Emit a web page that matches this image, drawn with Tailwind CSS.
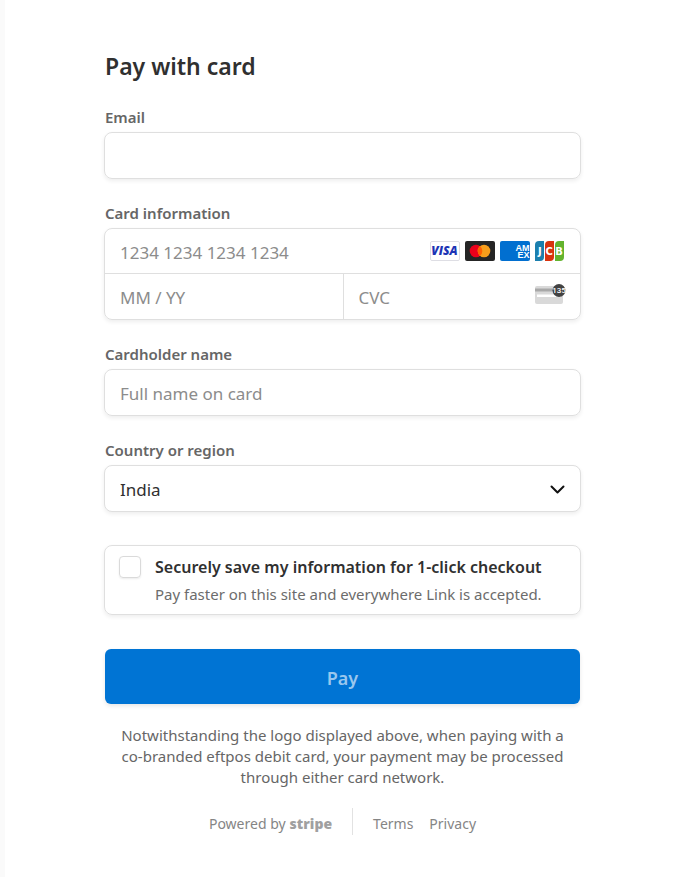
<!DOCTYPE html>
<html lang="en">
<head>
<meta charset="utf-8">
<meta name="viewport" content="width=device-width, initial-scale=1">
<title>Pay with card</title>
<script src="https://cdn.jsdelivr.net/npm/@tailwindcss/browser@4"></script>
</head>
<body class="min-h-screen border-l-[5px] border-[#fafafa] bg-white pr-[6px] font-['Segoe_UI','Noto_Sans',sans-serif] text-[#303030]">
<main class="mx-auto w-full max-w-[477px] pt-[48px] pb-10">
  <h1 class="px-px text-[23px] leading-9 font-semibold">Pay with card</h1>
  <form>
    <label for="email" class="mt-6 block px-px text-[15px] leading-[18px] font-semibold text-[#666]">Email</label>
    <input id="email" type="email" class="mt-[6px] block h-[47px] w-full rounded-lg border border-[#dfdfdf] px-[15px] pt-[2px] text-[17px] shadow-[0_2px_4px_rgba(0,0,0,0.07)]">

    <fieldset class="mt-[25px] min-w-0">
      <legend class="block px-px text-[15px] leading-[18px] font-semibold text-[#666]">Card information</legend>
      <div class="mt-[6px] rounded-lg border border-[#dfdfdf] shadow-[0_2px_4px_rgba(0,0,0,0.07)]">
        <div class="flex h-[45px] items-center border-b border-[#dfdfdf] pr-[15px]">
          <input aria-label="Card number" inputmode="numeric" placeholder="1234 1234 1234 1234" class="h-full min-w-0 flex-1 rounded-lg pt-[2px] pl-[15px] text-[17px] placeholder:text-[#8c8c8c]">
          <div class="flex gap-[5px]">
            <svg width="30" height="20" viewBox="0 0 30 20" role="img" aria-label="Visa"><rect x=".5" y=".5" width="29" height="19" rx="1.5" fill="#fff" stroke="#dedee4"/><text x="14.500" y="14" text-anchor="middle" font-family="Open Sans" font-size="12" font-weight="800" font-style="italic" fill="#1c34b5">VISA</text></svg>
            <svg width="30" height="20" viewBox="0 0 30 20" role="img" aria-label="Mastercard"><rect width="30" height="20" rx="2" fill="#252525"/><circle cx="11" cy="10" r="6.3" fill="#eb001b"/><circle cx="19" cy="10" r="6.3" fill="#f79e1b"/><path d="M15 5.1a6.3 6.3 0 0 1 0 9.8a6.3 6.3 0 0 1 0-9.8z" fill="#ff5f00"/></svg>
            <svg width="30" height="20" viewBox="0 0 30 20" role="img" aria-label="American Express"><rect width="30" height="20" rx="2" fill="#016fd0"/><g font-family="Liberation Sans" font-size="9" font-weight="700" fill="#fff"><text x="15.500" y="9.500">AM</text><text x="17.500" y="17">EX</text></g></svg>
            <svg width="30" height="20" viewBox="0 0 30 20" role="img" aria-label="JCB"><path d="M4 0H9V16a4 4 0 0 1-4 4H0V4a4 4 0 0 1 4-4z" fill="#1b7fae"/><path d="M14 0H19V16a4 4 0 0 1-4 4H10V4a4 4 0 0 1 4-4z" fill="#d8330f"/><path d="M24 0H29V16a4 4 0 0 1-4 4H20V4a4 4 0 0 1 4-4z" fill="#63b32e"/><g font-family="DejaVu Sans" font-size="10" font-weight="700" fill="#fff"><text x="3" y="13.500">J</text><text x="10.500" y="13.500">C</text><text x="20.300" y="13.500">B</text></g></svg>
          </div>
        </div>
        <div class="flex h-[45px]">
          <input aria-label="Expiration" inputmode="numeric" placeholder="MM / YY" class="min-w-0 flex-1 rounded-bl-lg border-r border-[#dfdfdf] pt-[2px] pl-[15px] text-[17px] placeholder:text-[#8c8c8c]">
          <div class="flex min-w-0 flex-1 items-center pr-[14px]">
            <input aria-label="CVC" inputmode="numeric" placeholder="CVC" class="h-full min-w-0 flex-1 pt-[2px] pl-[15px] text-[17px] placeholder:text-[#8c8c8c]">
            <svg class="mb-1" width="31" height="21" viewBox="0 0 31 21" role="img" aria-label="Security code on the back of the card"><rect y="2" width="28" height="18" rx="2" fill="#d9d9d9"/><path d="M0 4.500H28V7.500H0z" fill="#a8a8a8"/><path d="M2 10.500H26V13H2z" fill="#fff"/><circle cx="24" cy="6.500" r="6.500" fill="#424242"/><text x="24" y="9.300" text-anchor="middle" font-family="Roboto" font-size="8" font-weight="500" fill="#fff">135</text></svg>
          </div>
        </div>
      </div>
    </fieldset>

    <label for="name" class="mt-[25px] block px-px text-[15px] leading-[18px] font-semibold text-[#666]">Cardholder name</label>
    <input id="name" type="text" placeholder="Full name on card" class="mt-[6px] block h-[47px] w-full rounded-lg border border-[#dfdfdf] px-[15px] pt-[2px] text-[17px] shadow-[0_2px_4px_rgba(0,0,0,0.07)] placeholder:text-[#8c8c8c]">

    <label for="country" class="mt-[25px] block px-px text-[15px] leading-[18px] font-semibold text-[#666]">Country or region</label>
    <div class="relative mt-[6px]">
      <select id="country" class="block h-[47px] w-full appearance-none rounded-lg border border-[#dfdfdf] bg-white px-[15px] pt-[2px] text-[17px] shadow-[0_2px_4px_rgba(0,0,0,0.07)]"><option>India</option></select>
      <svg class="pointer-events-none absolute top-5 right-4" width="15" height="10" viewBox="0 0 15 10" fill="none" stroke="#111" stroke-width="2" stroke-linecap="round" stroke-linejoin="round"><path d="M1.500 1.500L7.500 7.500L13.500 1.500"/></svg>
    </div>

    <div class="mt-[33px] flex gap-[14px] rounded-lg border border-[#dfdfdf] px-[14px] pt-[10px] pb-[9px] shadow-[0_2px_4px_rgba(0,0,0,0.07)]">
      <input id="save" type="checkbox" class="size-[22px] shrink-0 appearance-none rounded border border-[#dadada] shadow-[0_1px_2px_rgba(0,0,0,0.08)] checked:bg-[#0074d4]">
      <div>
        <label for="save" class="block text-[16px] leading-[22px] font-semibold">Securely save my information for 1-click checkout</label>
        <p class="mt-[6px] text-[15px] leading-[21px] text-[#6c6c6c]">Pay faster on this site and everywhere Link is accepted.</p>
      </div>
    </div>

    <div class="mt-[34px] px-px">
      <button type="submit" class="block h-[55px] w-full rounded-md bg-[#0074d4] pt-1 text-[18px] font-semibold text-[#99c7ee] shadow-[0_2px_4px_rgba(0,0,0,0.1)]">Pay</button>
    </div>
  </form>
  <p class="mt-[21px] px-2 text-center text-[15px] leading-[21px] text-[#666]">Notwithstanding the logo displayed above, when paying with a co-branded eftpos debit card, your payment may be processed through either card network.</p>
  <footer class="mt-5 flex h-[27px] items-center justify-center text-[14px] text-[#858585]">
    <a href="#" class="flex h-full items-center gap-1 border-r border-[#e2e2e2] pr-5 pt-1">Powered by <span class="font-['Open_Sans',sans-serif] text-[14px] font-extrabold text-[#a0a0a0]">stripe</span></a>
    <a href="#" class="ml-5 pt-1">Terms</a>
    <a href="#" class="ml-4 pt-1">Privacy</a>
  </footer>
</main>
</body>
</html>
